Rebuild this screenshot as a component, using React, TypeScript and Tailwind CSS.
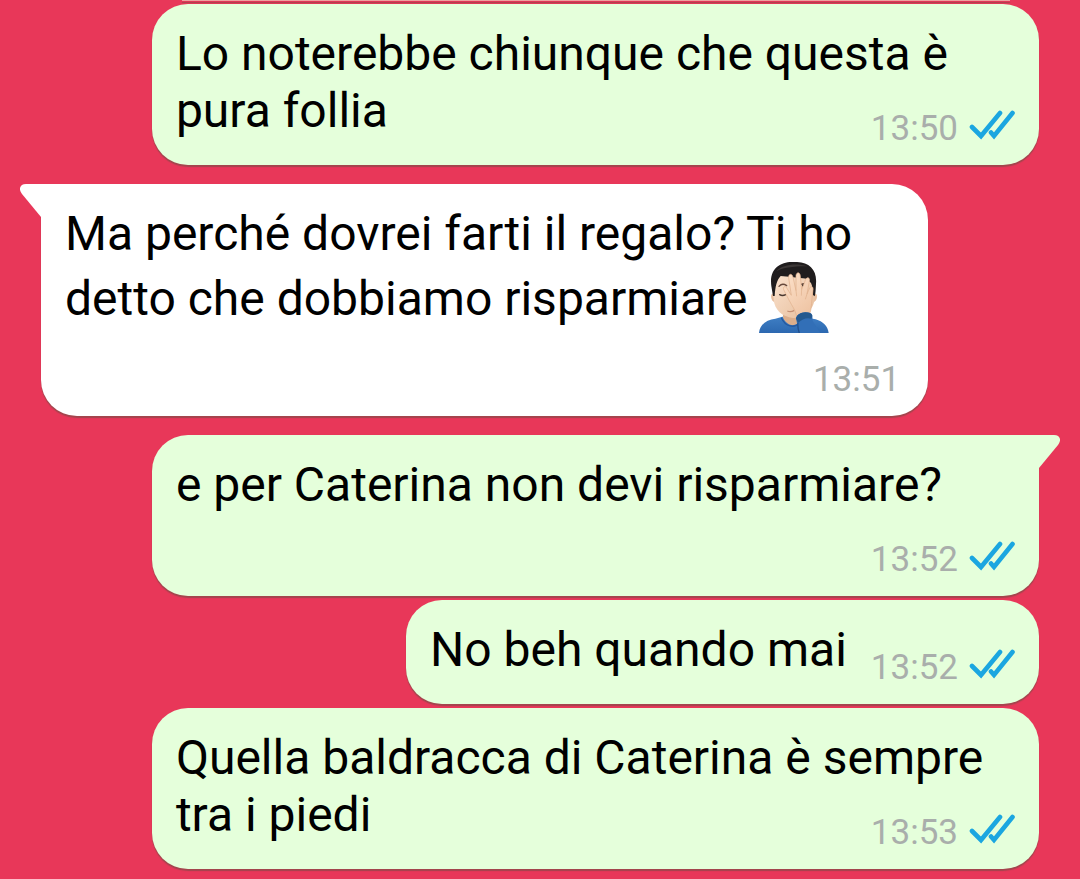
import type { ReactNode } from "react";

function Ticks() {
  return (
    <svg viewBox="0 0 46 32" className="mt-0.5 h-8 w-[46px]" fill="none" stroke="#1ba6e0" strokeWidth="4.6" strokeLinecap="round" role="img" aria-label="Letto">
      <path d="M3 17 L12 26 L31 3" strokeLinejoin="miter" />
      <path d="M22 22.5 L25 26 L43.5 3" strokeLinejoin="miter" />
    </svg>
  );
}

function Facepalm() {
  return (
    <svg viewBox="54 36 210 213" className="inline-block h-[71px] w-[70px] align-[-18px]" role="img" aria-label="Uomo con la mano sul volto">
      <defs>
        <linearGradient id="skin" x1="0" y1="0" x2="1" y2="1">
          <stop offset="0" stopColor="#fbe3cf" />
          <stop offset="1" stopColor="#e6bd9b" />
        </linearGradient>
        <linearGradient id="hand" x1="0" y1="0" x2="0.6" y2="1">
          <stop offset="0" stopColor="#fde2cb" />
          <stop offset="1" stopColor="#efc5a5" />
        </linearGradient>
        <linearGradient id="shirt" x1="0" y1="0" x2="0" y2="1">
          <stop offset="0" stopColor="#3f7fc4" />
          <stop offset="1" stopColor="#2c68b0" />
        </linearGradient>
      </defs>
      <path d="M54 249 C57 221 78 209 103 206 L124 200 H180 L224 208 C246 215 260 227 263 249Z" fill="url(#shirt)" />
      <path d="M126 182 V203 C138 229 164 232 176 214 V182Z" fill="#dbae8c" />
      <path d="M121 203 C134 232 160 235 176 219" fill="none" stroke="#2459a0" strokeWidth="4" />
      <path d="M97 132 C87 128 88 153 101 157Z M221 132 C231 128 231 153 217 157Z" fill="#e8bf9f" />
      <path d="M98 88 C98 58 220 58 221 96 L221 142 C220 180 188 206 156 204 C124 201 100 180 98 148Z" fill="url(#skin)" />
      <path d="M91 108 C84 55 118 35 158 36 C202 34 229 57 225 101 C224 119 224 130 221 139 L216 135 C216 119 214 107 210 99 L197 86 C169 83 139 80 119 78 C107 91 103 109 101 138 L96 138Z" fill="#201d1e" />
      <path d="M106 64 C124 42 169 39 199 49 C177 49 133 49 106 64Z" fill="#3d3837" />
      <path d="M114 109 Q124 98 137 107 M181 103 Q189 98 198 104" fill="none" stroke="#66483b" strokeWidth="4" strokeLinecap="round" />
      <path d="M116 134 Q124 139 134 134" fill="none" stroke="#493830" strokeWidth="4" strokeLinecap="round" />
      <circle cx="188" cy="106" r="5" fill="#352925" />
      <path d="M139 183 Q149 188 160 181" fill="none" stroke="#c58f73" strokeWidth="4" />
      <path d="M166 196 C163 179 153 168 145 152 L128 119 C125 109 134 107 138 115 L151 136 L143 83 C142 71 153 69 156 81 L165 122 L165 76 C167 65 177 66 178 78 L182 119 L194 88 C200 79 208 84 205 94 L198 132 L206 114 C212 106 218 112 216 121 C211 147 213 176 205 196 Q185 211 166 196Z" fill="url(#hand)" stroke="#dfaf8b" strokeWidth="2" />
      <path d="M165 122 L167 139 M182 119 L181 137 M198 132 L193 148" fill="none" stroke="#dfaf8b" strokeWidth="2" />
      <path d="M165 205 C168 194 179 188 193 187 Q211 187 214 197 L215 213 L238 249 H174Z" fill="#326fb7" />
      <path d="M165 205 C168 194 179 188 193 187 Q211 187 214 197 L211 206 Q190 200 171 219Z" fill="#24598f" />
      <path d="M171 219 Q169 232 175 249" fill="none" stroke="#204f8b" strokeWidth="4" />
    </svg>
  );
}

type BubbleProps = {
  time: string;
  sent?: boolean;
  tail?: boolean;
  children: ReactNode;
};

function Bubble({ time, sent = false, tail = false, children }: BubbleProps) {
  const tone = sent ? "self-end bg-[#e5ffdb] pr-6" : "self-start bg-white pr-7";
  const corner = !tail ? "" : sent ? "rounded-tr-none" : "rounded-tl-none";
  const space = tail ? "mt-[19px]" : "mt-1";
  return (
    <article className={`relative flow-root max-w-8/9 rounded-[36px] pt-[21px] pb-[15px] pl-6 shadow-[0_2px_1px_rgba(60,90,60,0.4)] ${tone} ${corner} ${space}`}>
      {tail && (
        <svg
          viewBox="0 0 22 34"
          className={`absolute top-0 h-[34px] w-[22px] ${sent ? "left-full -ml-px -scale-x-100 text-[#e5ffdb]" : "right-full -mr-px text-white"}`}
          fill="currentColor"
          aria-hidden="true"
        >
          <path d="M22 0 H6 C0 0 -2 5 2 10 L21 33 H22Z" />
        </svg>
      )}
      <div className="text-[48px] leading-[57px] text-black">
        {children}
        <span className="float-right mt-[26px] ml-6 flex items-start gap-[11px] text-[35px] leading-[42px] text-[#a9aeab]">
          <time>{time}</time>
          {sent && <Ticks />}
        </span>
      </div>
    </article>
  );
}

export default function App() {
  return (
    <main className="flex min-h-screen flex-col bg-[#e83759] px-[41px] pb-2.5 font-[Roboto,sans-serif]">
      <div className="-mb-px ml-[141px] mr-[29px] h-px bg-[#f0a0a0] shadow-[0_2px_1px_rgba(60,90,60,0.4)]" />
      <Bubble time="13:50" sent>Lo noterebbe chiunque che questa è pura follia</Bubble>
      <Bubble time="13:51" tail>
        Ma perché dovrei farti il regalo? Ti ho detto che dobbiamo risparmiare <Facepalm />
      </Bubble>
      <Bubble time="13:52" sent tail>e per Caterina non devi risparmiare?</Bubble>
      <Bubble time="13:52" sent>No beh quando mai</Bubble>
      <Bubble time="13:53" sent>Quella baldracca di Caterina è sempre tra i piedi</Bubble>
    </main>
  );
}
